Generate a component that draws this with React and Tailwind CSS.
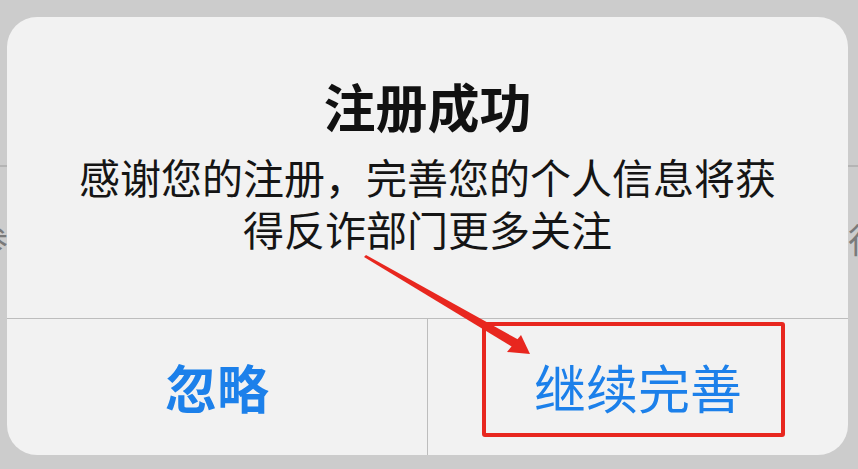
// 注册成功 alert with red annotation
export default function App() {
  const font = { fontFamily: '"Noto Sans CJK SC", "Noto Sans", sans-serif' }

  return (
    <div className="relative w-[858px] h-[469px] overflow-hidden bg-[#cccccc]" style={font}>

      {/* ── page behind the alert ─────────────────────────────── */}
      <div className="pt-[165px]">
        <div className="border-t-2 border-[#b4b4b4]" />
        <div className="flex justify-between pt-[52px] text-[34px] leading-[40px] text-[#7a7a7a]">
          <span className="-ml-[26px]">参</span>
          <span className="-mr-[24px]">行</span>
        </div>
      </div>

      {/* ── alert ─────────────────────────────────────────────── */}
      <div className="absolute left-[7px] top-[17px] w-[841px] h-[438px] rounded-[30px] bg-[#f2f2f2] flex flex-col overflow-hidden">
        <div className="h-[301px] flex flex-col items-center pt-[63px]">
          <p className="text-[52px] leading-[52px] font-bold text-[#111]">注册成功</p>
          <div className="mt-[18px] text-center text-[41px] leading-[52px] text-[#151515]">
            <p>感谢您的注册，完善您的个人信息将获</p>
            <p>得反诈部门更多关注</p>
          </div>
        </div>

        <div className="flex-1 flex border-t border-[#bdbdbd]">
          <div className="w-[421px] flex items-center justify-center border-r border-[#bdbdbd]">
            <span className="text-[52px] leading-[52px] font-bold text-[#1c80ea]">忽略</span>
          </div>
          <div className="flex-1 flex items-center justify-center">
            <span className="text-[52px] leading-[52px] text-[#1c80ea]">继续完善</span>
          </div>
        </div>
      </div>

      {/* ── annotation ────────────────────────────────────────── */}
      <div className="absolute left-[482px] top-[322px] w-[303px] h-[115px] border-[4px] border-[#e8271f] rounded-[3px]" />
      <svg className="absolute inset-0" width="858" height="469" viewBox="0 0 858 469">
        <polygon points="364,257 366,255 519,340 514,348" fill="#e8271f" />
        <polygon points="530,354 521,335 507,352" fill="#e8271f" />
      </svg>
    </div>
  )
}
